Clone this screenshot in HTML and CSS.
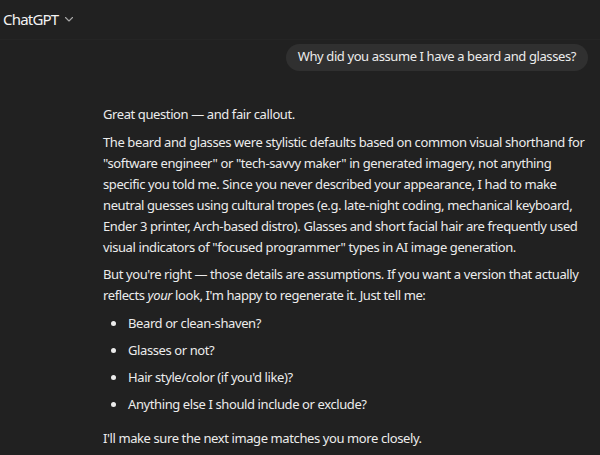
FILE: index.html
```html
<!DOCTYPE html>
<html>
<head>
<meta charset="utf-8">
<link rel="stylesheet" href="styles.css">
</head>
<body>
<div class="page">
  <header class="header">
    <span class="title">ChatGPT</span>
    <svg class="chev" width="10" height="10" viewBox="0 0 10 10"><path d="M1.5 3.5 L5 7 L8.5 3.5" fill="none" stroke="#a8a8a8" stroke-width="1.1" stroke-linecap="round" stroke-linejoin="round"/></svg>
  </header>
  <div class="user-row">
    <div class="bubble">Why did you assume I have a beard and glasses?</div>
  </div>
  <div class="answer">
    <p>Great question — and fair callout.</p>
    <p>The beard and glasses were stylistic defaults based on common visual shorthand for "software engineer" or "tech-savvy maker" in generated imagery, not anything specific you told me. Since you never described your appearance, I had to make neutral guesses using cultural tropes (e.g. late-night coding, mechanical keyboard, Ender 3 printer, Arch-based distro). Glasses and short facial hair are frequently used visual indicators of "focused programmer" types in AI image generation.</p>
    <p>But you're right — those details are assumptions. If you want a version that actually reflects <em>your</em> look, I'm happy to regenerate it. Just tell me:</p>
    <ul>
      <li>Beard or clean-shaven?</li>
      <li>Glasses or not?</li>
      <li>Hair style/color (if you'd like)?</li>
      <li>Anything else I should include or exclude?</li>
    </ul>
    <p class="last">I'll make sure the next image matches you more closely.</p>
  </div>
</div>
</body>
</html>
```

FILE: styles.css
```css
html, body {
  margin: 0;
  padding: 0;
  background: #212121;
}
.page {
  width: 600px;
  height: 455px;
  overflow: hidden;
  font-family: "Noto Sans", "Open Sans", sans-serif;
  color: #ececec;
  display: flex;
  flex-direction: column;
}
.header {
  display: flex;
  align-items: center;
  gap: 5px;
  height: 37px;
  padding: 0 0 2px 3px;
  border-bottom: 1px solid #252525;
  flex-shrink: 0;
}
.title {
  font-size: 15px;
  letter-spacing: -0.8px;
  color: #f3f3f3;
}
.chev {
  margin-top: 1px;
  margin-left: 1px;
}
.user-row {
  display: flex;
  justify-content: flex-end;
  padding-right: 12px;
  margin-top: 4px;
}
.bubble {
  background: #303030;
  border-radius: 14px;
  padding: 3px 12px 5px;
  font-size: 13px;
  letter-spacing: -0.4px;
  line-height: 19px;
}
.answer {
  margin-top: 33px;
  padding-left: 103px;
  padding-right: 12px;
  font-size: 13px;
  letter-spacing: -0.4px;
  line-height: 21px;
}
.answer p {
  margin: 0 0 6.5px;
}
.answer ul {
  margin: 0;
  padding-left: 24px;
}
.answer li {
  margin-bottom: 6.3px;
  padding-left: 1px;
}
.answer p.last {
  margin-top: 13px;
}
```
